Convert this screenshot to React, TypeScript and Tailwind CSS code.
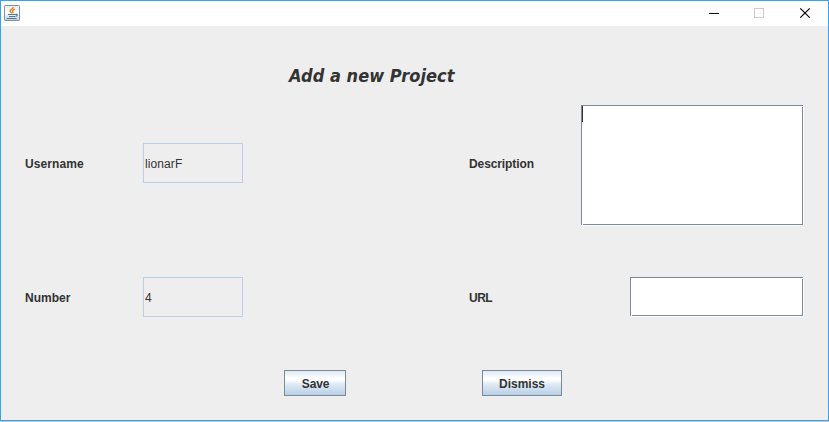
import React from "react";

const label = "text-[12px] font-bold leading-[14px]";

function ReadOnlyField({ value }: { value: string }) {
  return (
    <div className="flex h-10 w-[100px] items-center border border-[#b8cfe5] pl-px text-[12px] leading-[14px]">
      <span className="pt-px tracking-[0.1px]">{value}</span>
    </div>
  );
}

function EtchedBox({ className, caret }: { className: string; caret?: boolean }) {
  return (
    <div className={`relative border border-[#7a8a99] bg-white shadow-[1px_1px_0_0_#ffffff] ${className}`}>
      {caret && <div className="absolute left-0 top-0 h-4 w-px bg-[#333333]" />}
      <div className="absolute right-[-1px] top-0 h-px w-px bg-white" />
      <div className="absolute bottom-[-1px] left-0 h-px w-px bg-white" />
    </div>
  );
}

function MetalButton({ children, className }: { children: string; className: string }) {
  return (
    <button
      className={`flex h-[26px] items-center justify-center border border-[#7a8a99] bg-[linear-gradient(180deg,#dde8f3_0%,#ffffff_30%,#ffffff_36%,#dde8f3_58%,#b8cfe5_100%)] pt-px text-[12px] font-bold leading-[14px] text-[#333333] ${className}`}
    >
      {children}
    </button>
  );
}

function JavaIcon() {
  return (
    <svg width="16" height="16" viewBox="0 0 16 16" fill="none">
      <defs>
        <linearGradient id="tile" x1="0" y1="0" x2="0" y2="1">
          <stop offset="0" stopColor="#e4eaee" />
          <stop offset=".5" stopColor="#ffffff" />
          <stop offset="1" stopColor="#b7cad8" />
        </linearGradient>
      </defs>
      <rect x=".5" y=".5" width="15" height="15" rx=".7" fill="url(#tile)" stroke="#7c92a3" />
      <path d="M9.1 2C9.5 4.1 6 4.6 6.1 6.3c.1 1 1.4 1.3 1.4 2.2M10.9 4.2C9.2 4.9 8.2 5.6 8.7 6.4c.5.7.5 1.2 0 1.9" stroke="#ed7d21" strokeWidth="1.4" />
      <path d="M4 9.5h7.5M5 11.5h6M3 13.5h9.5M11.5 9.4c2.4-.6 2.3 1.6 0 2.1" stroke="#4d789c" strokeWidth="1.2" />
    </svg>
  );
}

export default function App() {
  return (
    <div className="flex h-[422px] w-[829px] flex-col bg-[#c3c7ca] font-['Liberation_Sans',Arial,sans-serif] text-[#333333]">
      <div className="flex h-[421px] flex-col border border-[#33a5ed] bg-[#eeeeee]">
        <header className="flex h-[25px] shrink-0 justify-between bg-white pl-[3px]">
          <div className="pt-1">
            <JavaIcon />
          </div>
          <div className="-mr-px flex">
            <svg width="46" height="25" viewBox="0 0 46 25" stroke="#000" shapeRendering="crispEdges">
              <path d="M18 12.5h10" />
            </svg>
            <svg width="46" height="25" viewBox="0 0 46 25" fill="none" stroke="#cccccc" shapeRendering="crispEdges">
              <path d="M17.5 7.5h9v9h-9z" />
            </svg>
            <svg width="46" height="25" viewBox="0 0 46 25" stroke="#000" strokeWidth="1.2">
              <path d="M17.3 7.3l9.4 9.4M26.7 7.3l-9.4 9.4" />
            </svg>
          </div>
        </header>
        <main className="flex flex-col">
          <h1 className="ml-[288px] mt-[37px] h-[25px] whitespace-nowrap font-['DejaVu_Sans_Condensed','DejaVu_Sans',sans-serif] text-[18px] font-bold italic leading-[26px] tracking-[0.04px] [font-stretch:75%]">
            Add a new Project
          </h1>
          <section className="mt-[17px] flex h-[120px]">
            <div className="flex h-[116px] items-center">
              <span className={`ml-6 w-[118px] pt-px tracking-[0.1px] ${label}`}>Username</span>
              <ReadOnlyField value="lionarF" />
            </div>
            <span className={`ml-[226px] mt-[52px] w-[112px] tracking-[-0.1px] ${label}`}>Description</span>
            <EtchedBox className="h-[120px] w-[222px]" caret />
          </section>
          <section className="mt-[52px] flex h-10 items-start">
            <span className={`ml-6 mt-[14px] w-[118px] ${label}`}>Number</span>
            <ReadOnlyField value="4" />
            <span className={`ml-[226px] mt-[14px] w-[161px] tracking-[-0.5px] ${label}`}>URL</span>
            <EtchedBox className="h-[39px] w-[173px]" />
          </section>
          <footer className="mt-[53px] flex gap-[136px] pl-[283px]">
            <MetalButton className="w-[62px] pl-px tracking-[-0.15px]">Save</MetalButton>
            <MetalButton className="w-[80px]">Dismiss</MetalButton>
          </footer>
        </main>
      </div>
    </div>
  );
}
